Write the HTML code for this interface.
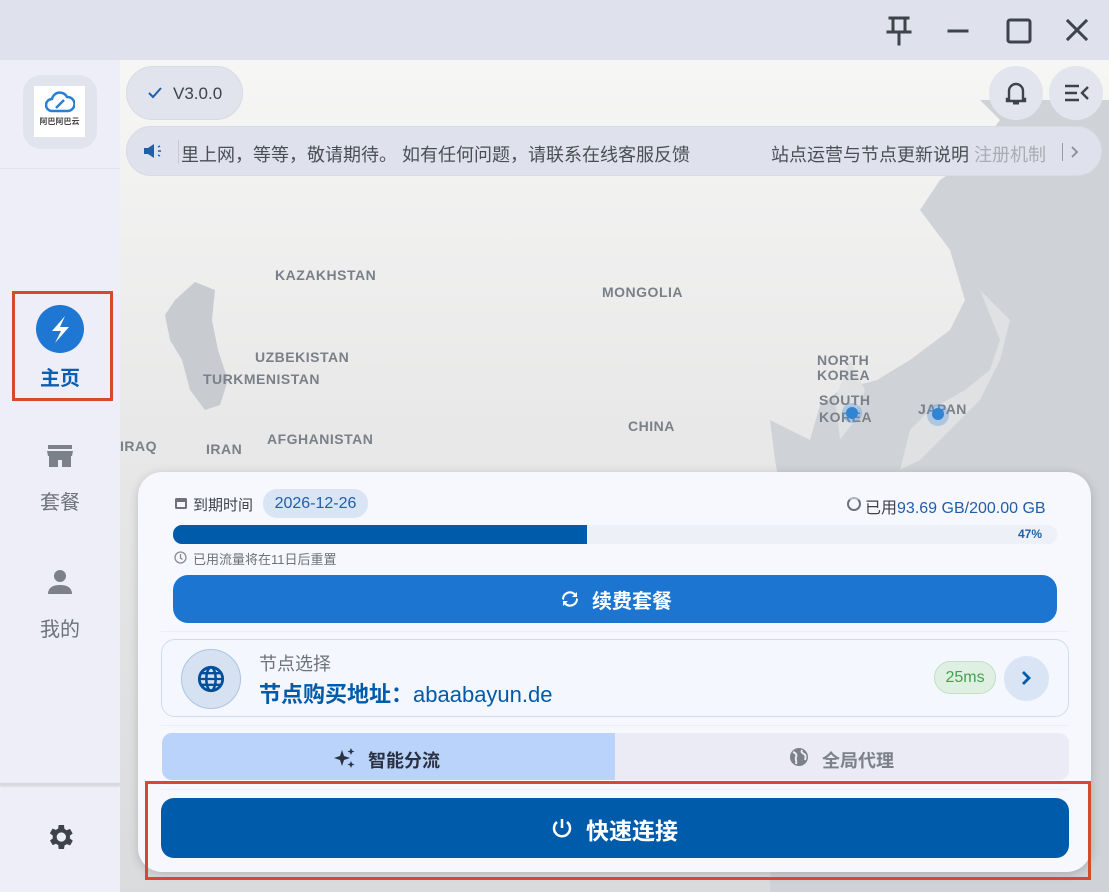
<!DOCTYPE html>
<html><head><meta charset="utf-8"><style>
*{box-sizing:border-box;margin:0;padding:0}
body{width:1109px;height:892px;overflow:hidden;position:relative;background:#dfe1ec;font-family:"Liberation Sans","Noto Sans CJK SC",sans-serif}
.abs{position:absolute}
.side{left:0;top:60px;width:120px;height:832px;background:#eeeef8}
.map{left:120px;top:60px;width:989px;height:832px;background:linear-gradient(#f6f6f5 0%,#e8e8e8 45%,#dadbdd 100%);overflow:hidden}
.lbl{position:absolute;color:#7b8088;font-size:14px;font-weight:bold;letter-spacing:0.5px;line-height:16px}
.card{left:138px;top:472px;width:953px;height:400px;background:#f7f7fe;border-radius:24px;box-shadow:0 2px 10px rgba(0,0,0,.18)}
</style></head><body>
<svg class="abs" style="left:880px;top:12px" width="220" height="40" viewBox="0 0 220 40">
 <g stroke="#3d424b" stroke-width="3" fill="none" stroke-linecap="square">
  <path d="M10 6h18M13 6v12M25 6v12M8 20h22M19 20v12"/>
  <path d="M69 19h18"/>
  <rect x="128" y="8" width="22" height="22" rx="2"/>
  <path d="M188 9l18 18M206 9l-18 18"/>
 </g>
</svg>
<div class="abs side"></div>
<div class="abs" style="left:0;top:168px;width:120px;height:1px;background:#e3e3ec"></div>
<div class="abs" style="left:0;top:783px;width:120px;height:2px;background:#d8d8e0;box-shadow:0 1px 2px rgba(0,0,0,.15)"></div>
<div class="abs" style="left:23px;top:75px;width:74px;height:74px;border-radius:18px;background:#e1e3ed"></div>
<div class="abs" style="left:34px;top:86px;width:51px;height:51px;background:#fff;text-align:center">
 <svg width="30" height="24" viewBox="0 0 30 24" style="margin-top:5px"><path d="M7 20a6 6 0 0 1 0-12a8 8 0 0 1 15-2a6 6 0 0 1 1 14z" fill="none" stroke="#2a7fd0" stroke-width="2.5"/><path d="M11 17l8-8" stroke="#2a7fd0" stroke-width="2.5"/></svg>
 <div style="font-size:8px;font-weight:bold;color:#444;line-height:8px;margin-top:-2px">阿巴阿巴云</div>
</div>
<div class="abs" style="left:12px;top:291px;width:101px;height:110px;border:3px solid #d5492f"></div>
<div class="abs" style="left:36px;top:305px;width:48px;height:48px;border-radius:50%;background:#1e77d2"></div>
<svg class="abs" style="left:36px;top:305px" width="48" height="48" viewBox="0 0 48 48"><path d="M29 11L16 26h9l-6 12 14-16h-9z" fill="#fff"/></svg>
<div class="abs" style="left:0;top:362px;width:120px;text-align:center;font-size:20px;font-weight:bold;color:#0a5fb0">主页</div>
<svg class="abs" style="left:46px;top:443px" width="28" height="26" viewBox="0 0 28 26"><path d="M2 2h24v4H2zM1 8h26l-1 5H2zM3 13h22v11h-9v-7h-4v7H3z" fill="#7c8089"/></svg>
<div class="abs" style="left:0;top:486px;width:120px;text-align:center;font-size:20px;color:#6e727a">套餐</div>
<svg class="abs" style="left:47px;top:568px" width="26" height="26" viewBox="0 0 26 26"><circle cx="13" cy="8" r="6" fill="#7c8089"/><path d="M1 26c0-7 6-9 12-9s12 2 12 9z" fill="#7c8089"/></svg>
<div class="abs" style="left:0;top:613px;width:120px;text-align:center;font-size:20px;color:#6e727a">我的</div>
<svg class="abs" style="left:44px;top:821px" width="32" height="32" viewBox="0 0 24 24"><path fill="#3d424b" d="M19.4 13a7.5 7.5 0 0 0 0-2l2.1-1.6-2-3.5-2.5 1a7 7 0 0 0-1.7-1L15 3h-4l-.4 2.7a7 7 0 0 0-1.7 1l-2.5-1-2 3.5L6.6 11a7.5 7.5 0 0 0 0 2l-2.1 1.6 2 3.5 2.5-1a7 7 0 0 0 1.7 1L11 21h4l.4-2.7a7 7 0 0 0 1.7-1l2.5 1 2-3.5zM13 15.5a3.5 3.5 0 1 1 0-7 3.5 3.5 0 0 1 0 7z"/></svg>

<div class="abs map">
 <svg class="abs" style="left:0;top:0" width="989" height="832" viewBox="0 0 989 832">
  <path d="M860 40L880 60L850 100L820 120L800 150L830 190L845 240L830 270L790 300L757 320L720 330L700 345L690 380L650 360L655 400L662 440L650 832L989 832L989 40Z" fill="#cfd2d6"/>
  <path d="M860 230L880 280L870 310L845 330L810 350L790 370L780 410L800 400L830 370L860 340L880 300L890 260Z" fill="#e0e1e2"/>
  <path d="M730 300L745 330L735 360L720 380L715 340Z" fill="#e0e1e2"/>
  <path d="M75 222L95 230L92 260L98 290L108 320L100 345L85 350L70 330L62 300L50 280L45 255L55 240Z" fill="#c8ccd1"/>
 </svg>
 <div class="lbl" style="left:155px;top:207px">KAZAKHSTAN</div>
 <div class="lbl" style="left:482px;top:224px">MONGOLIA</div>
 <div class="lbl" style="left:135px;top:289px">UZBEKISTAN</div>
 <div class="lbl" style="left:83px;top:311px">TURKMENISTAN</div>
 <div class="lbl" style="left:697px;top:293px;line-height:15px">NORTH<br>KOREA</div>
 <div class="lbl" style="left:699px;top:332px;line-height:17px">SOUTH<br>KOREA</div>
 <div class="lbl" style="left:798px;top:341px">JAPAN</div>
 <div class="lbl" style="left:508px;top:358px">CHINA</div>
 <div class="lbl" style="left:0;top:378px">IRAQ</div>
 <div class="lbl" style="left:86px;top:381px">IRAN</div>
 <div class="lbl" style="left:147px;top:371px">AFGHANISTAN</div>
 <div class="abs" style="left:722px;top:343px;width:20px;height:20px;border-radius:50%;background:rgba(80,150,220,.35)"></div>
 <div class="abs" style="left:726px;top:347px;width:12px;height:12px;border-radius:50%;background:#2f84d4"></div>
 <div class="abs" style="left:807px;top:344px;width:22px;height:22px;border-radius:50%;background:rgba(80,150,220,.35)"></div>
 <div class="abs" style="left:812px;top:348px;width:12px;height:12px;border-radius:50%;background:#2f84d4"></div>
</div>

<div class="abs" style="left:126px;top:66px;width:117px;height:54px;border-radius:27px;background:#e1e3ed;border:1px solid #d8dae4"></div>
<svg class="abs" style="left:147px;top:86px" width="16" height="14" viewBox="0 0 16 14"><path d="M2 7l4 4 8-9" stroke="#1e5fa8" stroke-width="2" fill="none"/></svg>
<div class="abs" style="left:173px;top:84px;font-size:17px;color:#3d424b">V3.0.0</div>
<div class="abs" style="left:989px;top:66px;width:54px;height:54px;border-radius:50%;background:#e3e5ee"></div>
<svg class="abs" style="left:1004px;top:80px" width="24" height="26" viewBox="0 0 24 26"><path d="M5 19V11a7 7 0 0 1 14 0v8h2v2H3v-2z" fill="none" stroke="#3d424b" stroke-width="2.4"/><rect x="9" y="22" width="6" height="2.5" fill="#3d424b"/></svg>
<div class="abs" style="left:1049px;top:66px;width:54px;height:54px;border-radius:50%;background:#e3e5ee"></div>
<svg class="abs" style="left:1063px;top:83px" width="28" height="20" viewBox="0 0 28 20"><path d="M2 3h14M2 10h12M2 17h14M25 4l-6 6 6 6" stroke="#3d424b" stroke-width="2.4" fill="none"/></svg>
<div class="abs" style="left:126px;top:126px;width:976px;height:50px;border-radius:25px;background:#dfe1ec;border:1px solid #d8dae4"></div>
<svg class="abs" style="left:143px;top:143px" width="20" height="16" viewBox="0 0 20 16"><path d="M1 5h4l6-4v14l-6-4H1z" fill="#1e5fa8"/><path d="M15 4l2-1M15 8h3M15 12l2 1" stroke="#1e5fa8" stroke-width="1.5"/></svg>
<div class="abs" style="left:178px;top:140px;width:1px;height:24px;background:#c8cad2"></div>
<div class="abs" style="left:181px;top:141px;font-size:18px;color:#4a4e56;white-space:nowrap">里上网，等等，敬请期待。 如有任何问题，请联系在线客服反馈</div>
<div class="abs" style="left:771px;top:141px;font-size:18px;color:#4a4e56;white-space:nowrap">站点运营与节点更新说明 <span style="color:#a9acb4">注册机制</span></div>
<div class="abs" style="left:1062px;top:143px;width:1px;height:18px;background:#9a9da5"></div>
<svg class="abs" style="left:1069px;top:145px" width="10" height="14" viewBox="0 0 10 14"><path d="M3 2l5 5-5 5" stroke="#8a8d95" stroke-width="1.8" fill="none"/></svg>

<div class="abs card"></div>
<svg class="abs" style="left:174px;top:496px" width="14" height="14" viewBox="0 0 14 14"><rect x="1" y="2" width="12" height="11" rx="1.5" fill="#6e727a"/><rect x="3" y="6" width="8" height="5" fill="#f7f7fe"/></svg>
<div class="abs" style="left:193px;top:494px;font-size:15px;color:#3d424b">到期时间</div>
<div class="abs" style="left:263px;top:489px;width:105px;height:29px;border-radius:14px;background:#d9e4f4;color:#1e5fa8;font-size:16px;text-align:center;line-height:29px">2026-12-26</div>
<div class="abs" style="left:847px;top:497px;width:14px;height:14px;border-radius:50%;border:2.5px solid #6e727a;border-top-color:#b0b3ba"></div>
<div class="abs" style="left:865px;top:494px;font-size:16px;color:#3d424b;white-space:nowrap">已用<span style="color:#1e5fa8">93.69 GB/200.00 GB</span></div>
<div class="abs" style="left:173px;top:525px;width:884px;height:19px;border-radius:9px;background:#eef0f7;overflow:hidden"><div style="width:414px;height:19px;background:#005bab"></div></div>
<div class="abs" style="left:1018px;top:527px;font-size:12px;font-weight:bold;color:#1e5fa8">47%</div>
<svg class="abs" style="left:174px;top:551px" width="13" height="13" viewBox="0 0 13 13"><circle cx="6.5" cy="6.5" r="5.5" fill="none" stroke="#8a8d95" stroke-width="1.3"/><path d="M6.5 3v4l2 1.5" stroke="#8a8d95" stroke-width="1.3" fill="none"/></svg>
<div class="abs" style="left:193px;top:549px;font-size:13px;color:#6e727a">已用流量将在11日后重置</div>
<div class="abs" style="left:173px;top:575px;width:884px;height:48px;border-radius:15px;background:#1c76d1"></div>
<svg class="abs" style="left:560px;top:589px" width="20" height="20" viewBox="0 0 20 20"><path d="M4 11a6 6 0 0 1 10-5l-2 2h5V3l-1.5 1.5A8 8 0 0 0 2 10zM16 9a6 6 0 0 1-10 5l2-2H3v5l1.5-1.5A8 8 0 0 0 18 10z" fill="#fff"/></svg>
<div class="abs" style="left:592px;top:585px;font-size:20px;font-weight:bold;color:#fff">续费套餐</div>
<div class="abs" style="left:161px;top:631px;width:908px;height:1px;background:#eceef5"></div>
<div class="abs" style="left:161px;top:639px;width:908px;height:78px;border-radius:14px;border:1.5px solid #cfdcef;background:#f5f7fe"></div>
<div class="abs" style="left:181px;top:649px;width:60px;height:60px;border-radius:50%;background:#d6e2f2;border:1.5px solid #a9c4e4"></div>
<svg class="abs" style="left:197px;top:665px" width="28" height="28" viewBox="0 0 24 24"><circle cx="12" cy="12" r="10" fill="none" stroke="#00509e" stroke-width="2.4"/><ellipse cx="12" cy="12" rx="4" ry="10" fill="none" stroke="#00509e" stroke-width="2.2"/><path d="M2 12h20M4 7h16M4 17h16" stroke="#00509e" stroke-width="2"/></svg>
<div class="abs" style="left:259px;top:650px;font-size:18px;color:#6e727a">节点选择</div>
<div class="abs" style="left:259px;top:677px;font-size:22px;color:#005bab;white-space:nowrap"><b>节点购买地址：</b>abaabayun.de</div>
<div class="abs" style="left:934px;top:661px;width:62px;height:33px;border-radius:17px;background:#dff0e2;border:1px solid #bfe0c4;color:#3fa34e;font-size:16px;text-align:center;line-height:31px">25ms</div>
<div class="abs" style="left:1004px;top:656px;width:45px;height:45px;border-radius:50%;background:#d9e4f4"></div>
<svg class="abs" style="left:1018px;top:669px" width="16" height="18" viewBox="0 0 16 18"><path d="M5 3l6 6-6 6" stroke="#005bab" stroke-width="2.8" fill="none"/></svg>
<div class="abs" style="left:161px;top:725px;width:908px;height:1px;background:#eceef5"></div>
<div class="abs" style="left:162px;top:733px;width:907px;height:47px;border-radius:10px;background:#eaebf4;overflow:hidden"><div style="width:453px;height:47px;background:#bad3fa"></div></div>
<svg class="abs" style="left:334px;top:747px" width="22" height="22" viewBox="0 0 22 22"><path d="M8 3l2 6 6 2-6 2-2 6-2-6-6-2 6-2z" fill="#2a3140"/><path d="M17 1l1 2.5 2.5 1-2.5 1-1 2.5-1-2.5-2.5-1 2.5-1zM17 14l1 2.5 2.5 1-2.5 1-1 2.5-1-2.5-2.5-1 2.5-1z" fill="#2a3140"/></svg>
<div class="abs" style="left:368px;top:747px;font-size:18px;font-weight:bold;color:#2a3140">智能分流</div>
<svg class="abs" style="left:789px;top:747px" width="20" height="20" viewBox="0 0 20 20"><circle cx="10" cy="10" r="9" fill="#7c8089"/><path d="M4 5c3 1 4 3 3 5s1 4 0 7M13 3c-1 2 0 3 2 4s2 3 1 6" stroke="#eaebf4" stroke-width="2" fill="none"/></svg>
<div class="abs" style="left:822px;top:747px;font-size:18px;font-weight:bold;color:#7c8089">全局代理</div>
<div class="abs" style="left:161px;top:789px;width:908px;height:1px;background:#eceef5"></div>
<div class="abs" style="left:145px;top:781px;width:946px;height:99px;border:3px solid #d5492f"></div>
<div class="abs" style="left:161px;top:798px;width:908px;height:60px;border-radius:13px;background:#005bab"></div>
<svg class="abs" style="left:550px;top:816px" width="24" height="24" viewBox="0 0 24 24"><path d="M7 6a8 8 0 1 0 10 0" stroke="#fff" stroke-width="2.5" fill="none"/><path d="M12 3v9" stroke="#fff" stroke-width="2.5"/></svg>
<div class="abs" style="left:586px;top:812px;font-size:23px;font-weight:bold;color:#fff">快速连接</div>
</body></html>
